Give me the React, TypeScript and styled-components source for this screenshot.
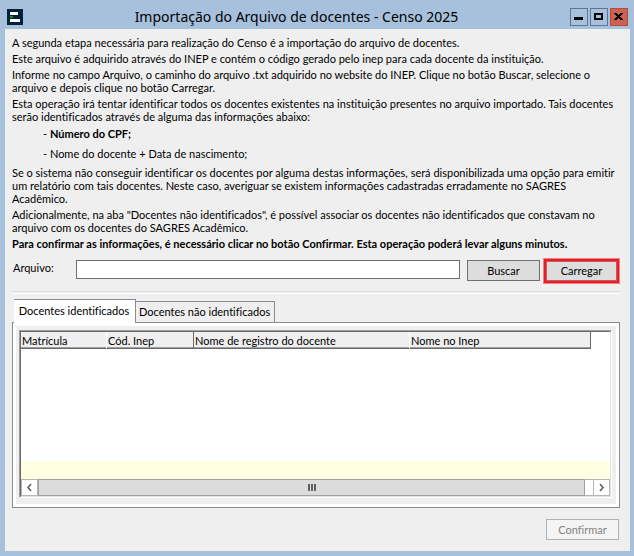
import React, { useState } from "react";
import styled, { createGlobalStyle } from "styled-components";

const GlobalStyle = createGlobalStyle`
  *, *::before, *::after { box-sizing: border-box; }
  body { margin: 0; background: #a7c0dc; }
  button, input { font: inherit; color: inherit; border-radius: 0; margin: 0; }
`;

const Window = styled.div`
  display: flex;
  flex-direction: column;
  min-height: 100vh;
  padding: 0 4px 5px 5px;
  background: #a7c0dc;
  color: #000;
  font: 11px/13px Lato, "Noto Sans", sans-serif;
  font-variant-ligatures: none;
`;

const TitleBar = styled.header`
  display: grid;
  grid-template-columns: 16px 1fr 58px;
  align-items: center;
  height: 29px;
  padding: 5px 2px 0;
`;

const Title = styled.h1`
  margin: 0;
  text-align: center;
  font: 400 14px/22px "Noto Sans", "Open Sans", sans-serif;
  white-space: nowrap;
`;

const AppIcon = styled.svg`
  display: block;
  width: 16px;
  height: 16px;
`;

const WindowButtons = styled.div`
  display: flex;
  justify-content: flex-end;
  gap: 2px;
`;

const WindowButton = styled.button<{ $danger?: boolean }>`
  width: 18px;
  height: 18px;
  padding: 0;
  border: 1px solid ${(p) => (p.$danger ? "#ad4f42" : "#5f7592")};
  background: ${(p) => (p.$danger ? "#cb6252" : "transparent")};
  svg { display: block; width: 16px; height: 16px; }
`;

const Content = styled.main`
  display: flex;
  flex: 1;
  flex-direction: column;
  padding: 7px 10px 11px 7px;
  background: #efefef;
`;

const Instructions = styled.section`
  display: flex;
  flex-direction: column;
  gap: 3px;
  white-space: nowrap;
`;

const Paragraph = styled.p`
  margin: 0;
`;

const Strong = styled.strong`
  font-weight: 700;
`;

const List = styled.ul`
  display: flex;
  flex-direction: column;
  gap: 7px;
  margin: 1px 0 3px;
  padding: 0 0 0 31px;
  list-style: none;
`;

const FileForm = styled.form`
  display: grid;
  grid-template-columns: 56px 1fr auto;
  align-items: start;
  column-gap: 7px;
  margin-top: 9px;
  padding: 0 1px;
`;

const FileLabel = styled.label`
  padding-top: 2px;
  white-space: nowrap;
`;

const FileInput = styled.input`
  min-width: 0;
  height: 19px;
  margin-top: 1px;
  padding: 0 3px;
  border: 1px solid #6e6e6e;
  background: #fff;
`;

const PushButton = styled.button`
  height: 21px;
  width: 73px;
  padding: 0 0 1px;
  border: 1px solid #707070;
  background: #ddd;
  &:disabled {
    border-color: #adb2b5;
    background: #f4f4f4;
    color: #838383;
  }
`;

const ButtonGroup = styled.div`
  display: flex;
  align-items: flex-start;
  gap: 4px;
  > ${PushButton} { margin-top: 1px; }
`;

const Highlight = styled.div`
  display: grid;
  width: 75px;
  border: 2px solid #ed1c24;
  box-shadow: 0 0 0 1px #ef8083;
  ${PushButton} { width: auto; height: 20px; border-color: #c06060; }
`;

const Separator = styled.hr`
  width: 100%;
  height: 3px;
  margin: 8px 0 5px;
  border: 0;
  border-top: 1px solid #d5dfe5;
  border-bottom: 1px solid #fff;
`;

const TabList = styled.div`
  display: flex;
  align-items: flex-end;
  padding-left: 2px;
`;

const Tab = styled.button<{ $active: boolean }>`
  position: relative;
  z-index: 1;
  height: ${(p) => (p.$active ? 24 : 21)}px;
  min-width: ${(p) => (p.$active ? 122 : 139)}px;
  margin-bottom: ${(p) => (p.$active ? -1 : 0)}px;
  padding: 0 4px ${(p) => (p.$active ? 3 : 1)}px 3px;
  border: 1px solid #898c95;
  border-width: 1px 1px 0 0;
  background: ${(p) => (p.$active ? "#fff" : "#efefef")};
  white-space: nowrap;
`;

const TabPanel = styled.section`
  display: flex;
  flex: 1;
  flex-direction: column;
  padding: 3px;
  border: 1px solid #898c95;
  background: #fff;
`;

const PanelBody = styled.div`
  display: flex;
  flex: 1;
  padding: 4px 4px 6px 3px;
  background: #efefef;
`;

const GridFrame = styled.div`
  display: flex;
  flex: 1;
  flex-direction: column;
  border: 1px solid;
  border-color: #a0a0a0 #fff #fff #a0a0a0;
  background: #fff;
`;

const GridInner = styled.div`
  display: flex;
  flex: 1;
  flex-direction: column;
  border: 1px solid;
  border-color: #696969 #e3e3e3 #e3e3e3 #696969;
`;

const TableArea = styled.div`
  display: grid;
  flex: 1;
`;

const Table = styled.table`
  width: 100%;
  height: 100%;
  table-layout: fixed;
  border-collapse: separate;
  border-spacing: 0;
`;

const HeadCell = styled.th<{ $divided?: boolean }>`
  height: 17px;
  padding: 1px 0 1px 1px;
  border-right: 1px solid ${(p) => (p.$divided ? "#696969" : "#fff")};
  border-bottom: 1px solid #696969;
  background: #efefef;
  box-shadow: inset 0 -1px 0 #a0a0a0;
  text-align: left;
  font-weight: 400;
  white-space: nowrap;
`;

const BlankHead = styled.td`
  padding: 0;
`;

const Cell = styled.td<{ $marked?: boolean }>`
  height: ${(p) => (p.$marked ? "18px" : "auto")};
  padding: 0;
  background: ${(p) => (p.$marked ? "#ffffe1" : "#fff")};
`;

const ScrollBar = styled.div`
  display: grid;
  grid-template-columns: 17px 1fr 8px 17px;
  height: 17px;
  background: #fff;
`;

const ScrollButton = styled.button`
  display: grid;
  place-items: center;
  padding: 0;
  border: 1px solid #b4b4b4;
  background: #fff;
`;

const ScrollThumb = styled.div`
  display: grid;
  place-items: center;
  border: 1px solid #a0a0a0;
  background: #dcdcdc;
`;

const ScrollGap = styled.div`
  border: 1px solid #b4b4b4;
  border-width: 1px 0;
`;

const Footer = styled.footer`
  display: flex;
  justify-content: flex-end;
  padding: 11px 1px 0 0;
`;

const Arrow = ({ d }: { d: string }) => (
  <svg width="9" height="9" viewBox="0 0 9 9" fill="none" stroke="#606060" strokeWidth="1.6" aria-hidden="true">
    <path d={d} />
  </svg>
);

const tabs = ["Docentes identificados", "Docentes não identificados"];
const columns = [
  { label: "Matrícula", width: 86 },
  { label: "Cód. Inep", width: 87, divided: true },
  { label: "Nome de registro do docente", width: 216 },
  { label: "Nome no Inep", width: 181, divided: true },
];

export default function App() {
  const [active, setActive] = useState(0);
  const [file, setFile] = useState("");

  return (
    <Window>
      <GlobalStyle />
      <TitleBar>
        <AppIcon viewBox="0 0 16 16" aria-hidden="true">
          <path fill="#00203c" d="M0 0h16v16H0z" />
          <path fill="#fff" d="M3 3h8v3H3zM3 10h10v3H3z" />
          <path fill="#16900f" d="M3 7h3v2H3z" />
        </AppIcon>
        <Title>Importação do Arquivo de docentes - Censo 2025</Title>
        <WindowButtons>
          <WindowButton aria-label="Minimizar">
            <svg viewBox="0 0 16 16"><path d="M3 8h9v3H3z" /></svg>
          </WindowButton>
          <WindowButton aria-label="Maximizar">
            <svg viewBox="0 0 16 16"><path fillRule="evenodd" d="M3 4h9v7H3zM5 6v3h5V6z" /></svg>
          </WindowButton>
          <WindowButton $danger aria-label="Fechar">
            <svg viewBox="0 0 16 16" shapeRendering="crispEdges">
              <path d="M3 4h3v1h1v1h1v-1h1v-1h3v1h-1v1h-1v1h-1v1h1v1h1v1h1v1h-3v-1h-1v-1h-1v1h-1v1h-3v-1h1v-1h1v-1h1v-1h-1v-1h-1v-1h-1z" />
            </svg>
          </WindowButton>
        </WindowButtons>
      </TitleBar>

      <Content>
        <Instructions>
          <Paragraph>A segunda etapa necessária para realização do Censo é a importação do arquivo de docentes.</Paragraph>
          <Paragraph>Este arquivo é adquirido através do INEP e contém o código gerado pelo inep para cada docente da instituição.</Paragraph>
          <Paragraph>
            Informe no campo Arquivo, o caminho do arquivo .txt adquirido no website do INEP. Clique no botão Buscar, selecione o<br />
            arquivo e depois clique no botão Carregar.
          </Paragraph>
          <Paragraph>
            Esta operação irá tentar identificar todos os docentes existentes na instituição presentes no arquivo importado. Tais docentes<br />
            serão identificados através de alguma das informações abaixo:
          </Paragraph>
          <List>
            <li>- <Strong>Número do CPF;</Strong></li>
            <li>- Nome do docente + Data de nascimento;</li>
          </List>
          <Paragraph>
            Se o sistema não conseguir identificar os docentes por alguma destas informações, será disponibilizada uma opção para emitir<br />
            um relatório com tais docentes. Neste caso, averiguar se existem informações cadastradas erradamente no SAGRES<br />
            Acadêmico.
          </Paragraph>
          <Paragraph>
            Adicionalmente, na aba "Docentes não identificados", é possível associar os docentes não identificados que constavam no<br />
            arquivo com os docentes do SAGRES Acadêmico.
          </Paragraph>
          <Paragraph>
            <Strong>Para confirmar as informações, é necessário clicar no botão Confirmar. Esta operação poderá levar alguns minutos.</Strong>
          </Paragraph>
        </Instructions>

        <FileForm onSubmit={(e) => e.preventDefault()}>
          <FileLabel htmlFor="arquivo">Arquivo:</FileLabel>
          <FileInput id="arquivo" type="text" value={file} onChange={(e) => setFile(e.target.value)} />
          <ButtonGroup>
            <PushButton type="button">Buscar</PushButton>
            <Highlight>
              <PushButton type="submit">Carregar</PushButton>
            </Highlight>
          </ButtonGroup>
        </FileForm>

        <Separator />

        <TabList role="tablist">
          {tabs.map((label, i) => (
            <Tab
              key={label}
              id={`tab-${i}`}
              role="tab"
              aria-selected={active === i}
              aria-controls="painel"
              $active={active === i}
              onClick={() => setActive(i)}
            >
              {label}
            </Tab>
          ))}
        </TabList>
        <TabPanel id="painel" role="tabpanel" aria-labelledby={`tab-${active}`}>
          <PanelBody>
            <GridFrame>
              <GridInner>
                <TableArea>
                  <Table>
                    <colgroup>
                      {columns.map((c) => <col key={c.label} width={c.width} />)}
                      <col />
                    </colgroup>
                    <thead>
                      <tr>
                        {columns.map((c) => (
                          <HeadCell key={c.label} scope="col" $divided={c.divided}>{c.label}</HeadCell>
                        ))}
                        <BlankHead />
                      </tr>
                    </thead>
                    <tbody>
                      <tr><Cell colSpan={5} /></tr>
                      <tr><Cell colSpan={5} $marked /></tr>
                    </tbody>
                  </Table>
                </TableArea>
                <ScrollBar>
                  <ScrollButton aria-label="Rolar para a esquerda"><Arrow d="M6 1L3 4.500L6 8" /></ScrollButton>
                  <ScrollThumb>
                    <svg width="8" height="7" viewBox="0 0 8 7" aria-hidden="true">
                      <path fill="#606060" d="M0 0h2v7H0zM3 0h2v7H3zM6 0h2v7H6z" />
                    </svg>
                  </ScrollThumb>
                  <ScrollGap />
                  <ScrollButton aria-label="Rolar para a direita"><Arrow d="M3 1L6 4.500L3 8" /></ScrollButton>
                </ScrollBar>
              </GridInner>
            </GridFrame>
          </PanelBody>
        </TabPanel>

        <Footer>
          <PushButton type="button" disabled>Confirmar</PushButton>
        </Footer>
      </Content>
    </Window>
  );
}
